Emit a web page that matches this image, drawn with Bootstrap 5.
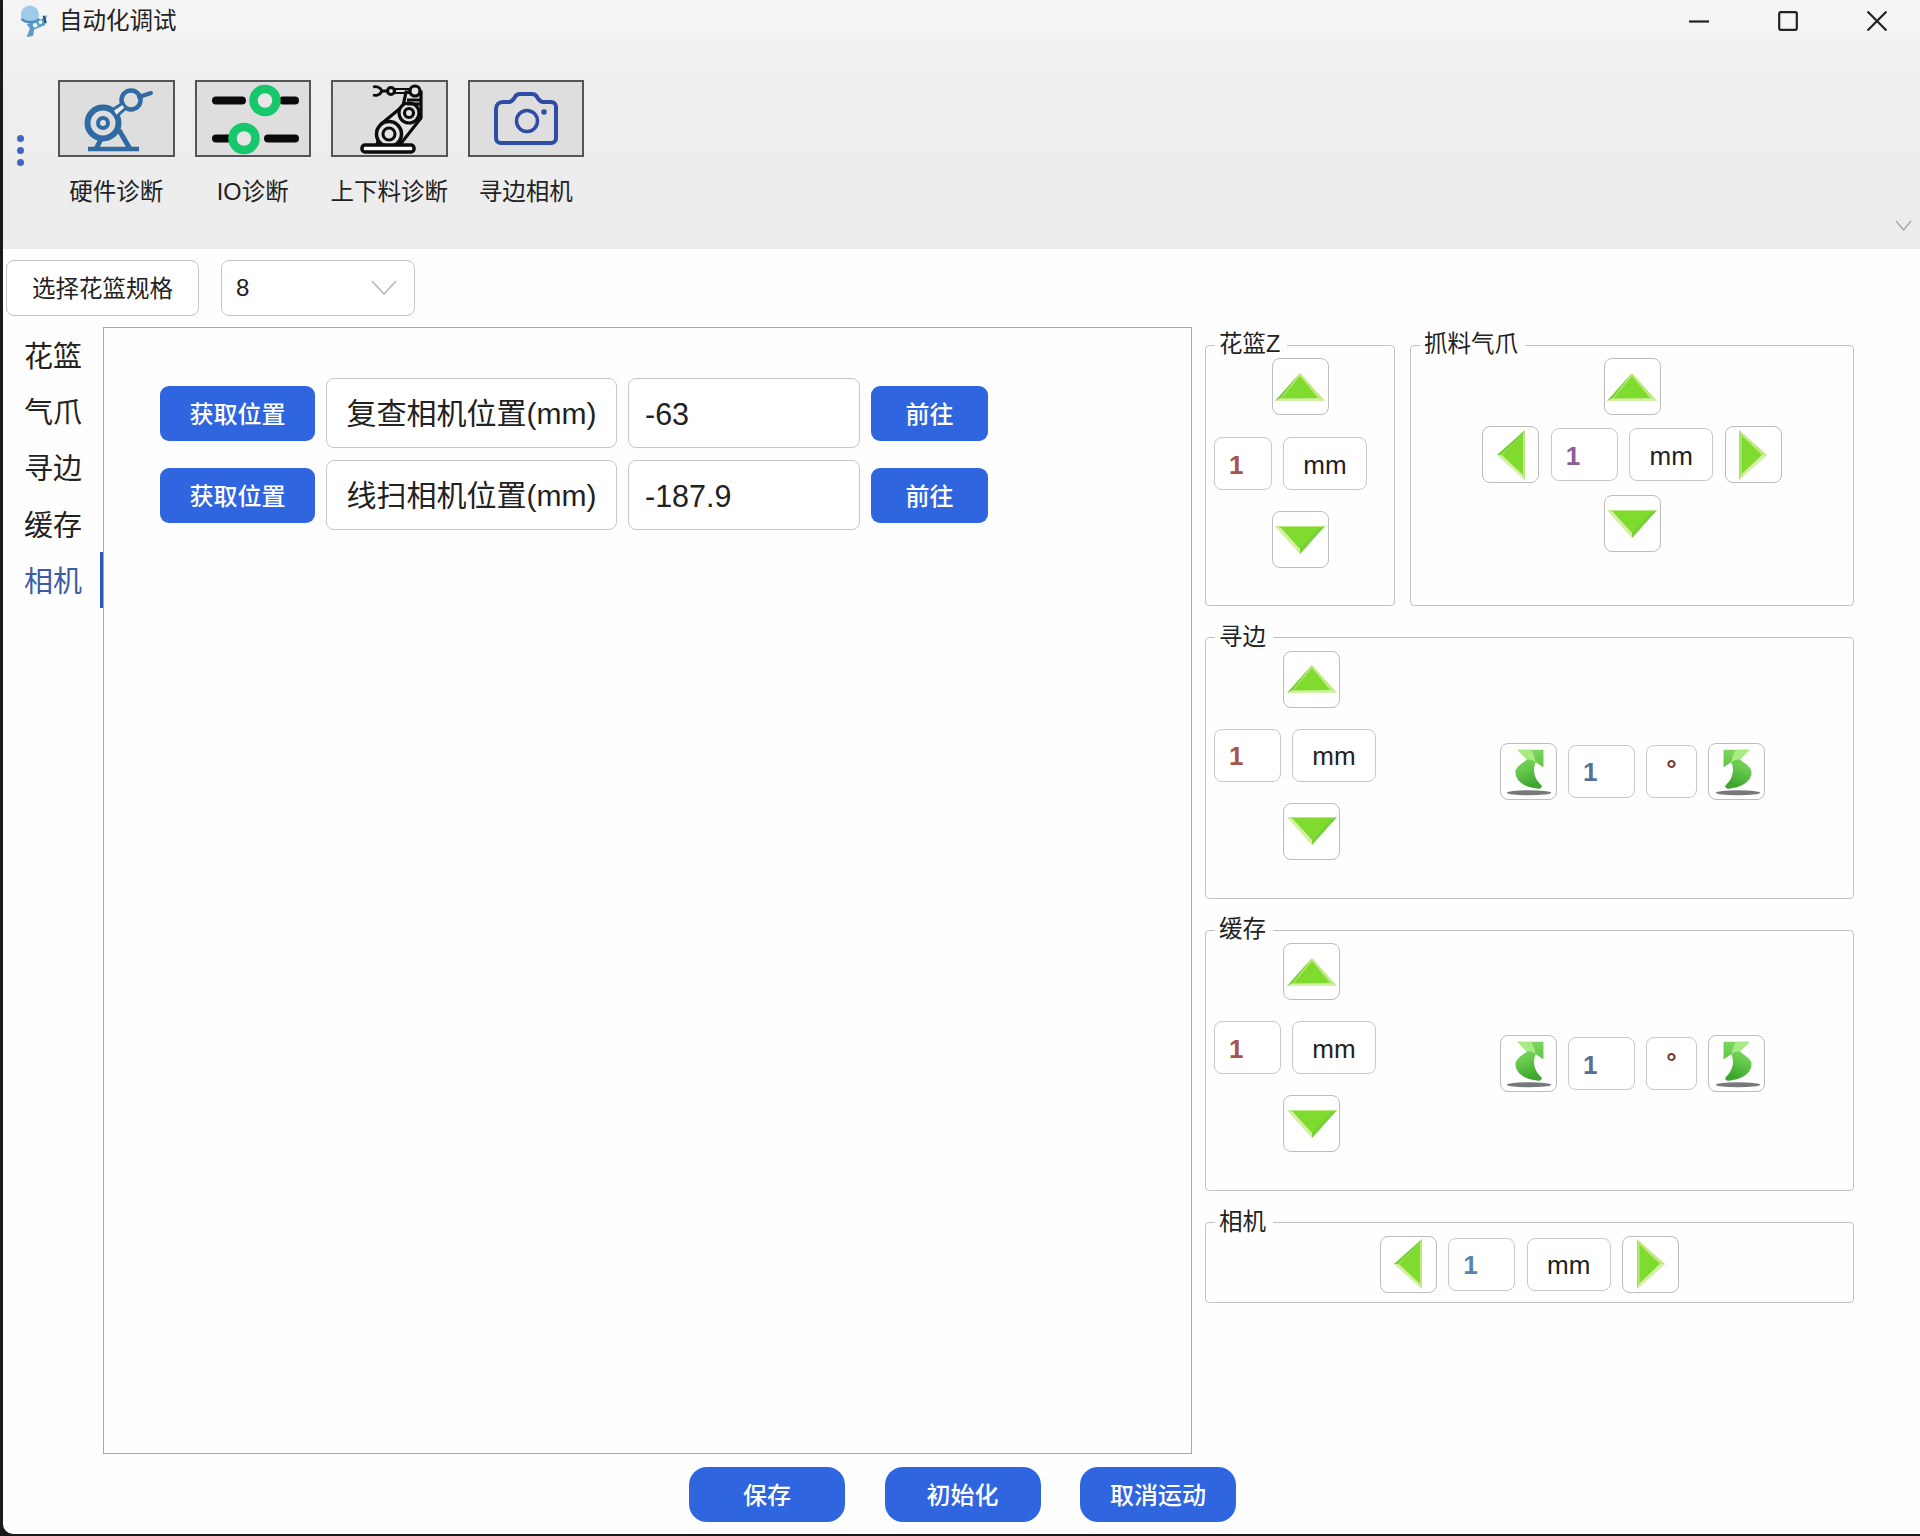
<!DOCTYPE html>
<html lang="zh-CN">
<head>
<meta charset="utf-8">
<title>自动化调试</title>
<link href="https://cdn.jsdelivr.net/npm/bootstrap@5.3.0/dist/css/bootstrap.min.css" rel="stylesheet">
<style>
html,body{margin:0;height:1536px;overflow:hidden;background:#1a1a1a}
body{font-family:"Liberation Sans","Noto Sans CJK SC",sans-serif;color:#222}
.app-win{width:1917px;height:1534px;margin-left:3px;background:#fefefe;border-bottom-left-radius:10px;overflow:hidden}
.title-bar{height:42px;background:linear-gradient(#f5f5f5,#f4f4f4 75%,#f1f1f1);flex:none}
.title-txt{font-size:23.5px;line-height:1;color:#222;margin-left:11px;padding-top:2px}
.app-icon{margin-left:13px;width:32px;height:34px}
.win-ctrls{margin-right:33px;gap:69px}
.ribbon{height:207px;background:linear-gradient(#f1f1f1,#eeeeee 25%,#ececec);flex:none;position:relative}
.rib-dots{width:55px;padding-left:14px;padding-top:93px;gap:5px}
.rib-dot{width:7px;height:7px;border-radius:50%;background:#3f66c4}
.rib-items{padding-top:38px;gap:20px}
.rib-item{width:116.5px}
.rib-tile{width:116.5px;height:77px;background:#dedede;border:2px solid #555;padding:0}
.rib-label{font-size:23.5px;line-height:1;margin-top:24px;color:#222;white-space:nowrap}
.rib-chev{position:absolute;right:8px;bottom:18px}
.spec-row{padding:11px 0 0 3px;gap:22px;flex:none;height:78px}
.spec-btn{width:193px;height:56px;font-size:23.5px;color:#222;background:#fff;border:1.5px solid #c4c4c4;border-radius:8px;padding:4px 0 0}
.spec-sel{width:194px;height:56px;font-size:24px;color:#222;border:1.5px solid #c4c4c4;border-radius:8px;padding:0 0 0 14px;background-color:#fff;background-image:url("data:image/svg+xml,%3csvg xmlns='http://www.w3.org/2000/svg' viewBox='0 0 26 16'%3e%3cpath fill='none' stroke='%23bbb' stroke-width='1.8' d='M1 1l12 13L25 1'/%3e%3c/svg%3e");background-size:26px 16px;background-position:right 17px center}
.mid-row{height:1127px;flex:none}
.tab-col{width:100px;flex:none}
.tab-item{height:56.3px;font-size:29px;line-height:1;padding:4px 0 0 21px;color:#222;border-right:3px solid transparent;display:flex;align-items:center;white-space:nowrap}
.tab-item.is-on{color:#3d5ca8;border-right-color:#2f5ab4}
.main-panel{width:1089px;height:1127px;border:1.5px solid #a8a8a8;padding:50px 0 0 56px;flex:none;gap:12px;background:#fefefe}
.pos-row{gap:11px;height:70px}
.act-btn{background:#2f66e0;border:none;color:#fff;font-weight:500;font-size:24px;border-radius:9px;padding:3px 0 0;line-height:1}
.act-btn:hover{background:#2f66e0;color:#fff}
.act-get{width:155px;height:55px;margin-top:1px}
.act-go{width:117px;height:55px;margin-top:1px}
.txt-box{background:#fff;border:1.5px solid #c8c8c8;border-radius:8px;display:flex;align-items:center;justify-content:center;white-space:nowrap}
.lab-box{width:291px;height:70px;font-size:30px}
.val-box{width:232px;height:70px;font-size:30.5px;justify-content:flex-start;padding:3px 0 0 16px}
.right-col{margin-left:13px;width:649px;padding-top:5px;gap:18.5px}
.grp{border:1.5px solid #c2c2c2;border-radius:4px;margin:0;padding:0;min-width:0;background:transparent}
.grp>legend{float:none;width:auto;margin:0 0 0 9px;padding:0 7px 0 4px;font-size:23.5px;line-height:24px;height:26px;color:#222}
.grp-tall{height:274px}
.grp-short{height:93px}
.grp-top{gap:15px}
.grp-z{width:190px;flex:none}
.grp-claw{width:444px;flex:none}
.ico-btn{width:57px;height:57px;background:#fff;border:1.5px solid #bdbdbd;border-radius:8px;padding:0;display:flex;align-items:center;justify-content:center;flex:none}
.num-box,.unit-box{height:53px;font-size:26px;flex:none;padding-top:3px}
.num-box{width:67px;justify-content:flex-start;padding-left:14px;font-weight:700}
.num-z{width:58px}
.unit-box{width:84px;color:#222}
.deg-box{width:51px;height:53px;font-size:26px;flex:none;padding-bottom:3px;color:#7a3a30;font-weight:700}
.t-red{color:#a8534f}.t-pur{color:#8a5f94}.t-blu{color:#566f92}.t-sky{color:#5585b0}
.stack-z{gap:22px}
.z-down{margin-top:-1px}
.pair{gap:11.5px}
.z-pair{align-self:flex-start;margin-left:8px;gap:11px}
.cross{gap:11px}
.cross-down{margin-top:1px}
.free-left{width:172px;margin-left:8px;flex:none;gap:21px}
.free-left .pair{gap:11px}
.free-arrow{align-self:flex-start;margin-left:69px}
.rot-row{margin:92px 88px 0 auto;gap:11px;align-self:flex-start}
.foot-row{gap:39.5px;padding:13px 0 0 2px}
.foot-btn{width:156px;height:55px;border-radius:18px}
</style>
</head>
<body>
<svg width="0" height="0" class="position-absolute">
<defs>
<linearGradient id="gArrow" x1="0" y1="0" x2="0.3" y2="1"><stop offset="0" stop-color="#8be06a"/><stop offset="0.55" stop-color="#66c94c"/><stop offset="1" stop-color="#3ea62f"/></linearGradient>
<symbol id="tri-up" viewBox="0 0 50 28"><polygon points="25,0 50,28 0,28" fill="#bfe97f"/><polygon points="25,3 43,25 6,26" fill="#7fdc2e"/><polygon points="25,0 0,28 6,25" fill="#74d238"/><polygon points="50,28 0,28 5,25.500 45,25.500" fill="#d4efa6"/></symbol>
<symbol id="tri-down" viewBox="0 0 50 28"><polygon points="0,0 50,0 25,28" fill="#bfe97f"/><polygon points="4,1 46,1 25,24" fill="#7fdc2e"/><polygon points="0,0 25,28 25,23 6,2" fill="#d4efa6"/><polygon points="50,0 25,28 25,23 44,2" fill="#74d238"/></symbol>
<symbol id="tri-left" viewBox="0 0 28 50"><polygon points="28,0 0,25 28,50" fill="#bfe97f"/><polygon points="26,4 5,25 26,45" fill="#7fdc2e"/><polygon points="28,0 0,25 4,25 25,5" fill="#74d238"/><polygon points="28,50 0,25 4,25 25,44" fill="#d4efa6"/></symbol>
<symbol id="tri-right" viewBox="0 0 28 50"><polygon points="0,0 28,25 0,50" fill="#bfe97f"/><polygon points="2,5 23,25 2,45" fill="#7fdc2e"/><polygon points="0,0 0,50 3,44 3,6" fill="#a8e46c"/><polygon points="0,50 28,25 23,25 3,44" fill="#d4efa6"/></symbol>
<symbol id="turn-a" viewBox="0 0 57 57"><ellipse cx="29" cy="50.500" rx="23" ry="2.600" fill="#77787c"/><path d="M17 6H44V24L36 19C32 27 35 37 42 43C43 45 41 47 37 46C27 45 15 40 15 29C15 24 22 20 27 16Z" fill="url(#gArrow)"/><path d="M27 16L17 6H31C34 10 35 15 36 19C33 16 30 16 27 16Z" fill="#a8ea84"/></symbol>
</defs>
</svg>
<div class="app-win d-flex flex-column">
  <div class="title-bar d-flex align-items-center">
    <svg class="app-icon" viewBox="0 0 30 32"><circle cx="13" cy="10" r="8.500" fill="#9ecbea"/><path d="M5 14C9 18 18 18 22 14" stroke="#4a88b8" stroke-width="2" fill="none"/><path d="M10 19L24 14L29 10L27 20L17 24L16 30L10 31L13 23Z" fill="#5b9cc8"/><circle cx="18" cy="20" r="2.200" fill="#eef6fb"/><circle cx="23" cy="17" r="1.800" fill="#eef6fb"/><path d="M26 11L28 18" stroke="#1f4f80" stroke-width="2"/></svg>
    <span class="title-txt">自动化调试</span>
    <div class="win-ctrls d-flex align-items-center ms-auto">
      <svg width="20" height="20" viewBox="0 0 20 20"><path d="M0 10.500H20" stroke="#222" stroke-width="2.200"/></svg>
      <svg width="20" height="20" viewBox="0 0 20 20"><rect x="1.200" y="1.200" width="17.600" height="17.600" rx="1.500" fill="none" stroke="#222" stroke-width="2.200"/></svg>
      <svg width="20" height="20" viewBox="0 0 20 20"><path d="M0.500 0.500L19.500 19.500M19.500 0.500L0.500 19.500" stroke="#222" stroke-width="2.200"/></svg>
    </div>
  </div>
  <div class="ribbon d-flex">
    <div class="rib-dots d-flex flex-column"><span class="rib-dot"></span><span class="rib-dot"></span><span class="rib-dot"></span></div>
    <div class="rib-items d-flex">
      <div class="rib-item d-flex flex-column align-items-center">
        <button type="button" class="rib-tile d-block"><svg width="112" height="73" viewBox="0 0 112 73" class="d-block" fill="none" stroke="#2f6aa2"><circle cx="43" cy="41" r="15.500" stroke-width="6"/><circle cx="43" cy="41" r="5" stroke-width="4"/><circle cx="71" cy="18" r="9.500" stroke-width="4.500"/><path d="M52 28L63 21L66 26L56 35Z" stroke-width="3" fill="#e8eef2"/><path d="M79 15L91 11" stroke-width="4" stroke-linecap="round"/><path d="M28 67H79" stroke-width="4.500"/><path d="M41 57L36 67M59 48L70 67" stroke-width="5"/></svg></button>
        <div class="rib-label">硬件诊断</div>
      </div>
      <div class="rib-item d-flex flex-column align-items-center">
        <button type="button" class="rib-tile d-block"><svg width="112" height="73" viewBox="0 0 112 73" class="d-block" fill="none"><path d="M19 18.500H45M86 18.500H98M19 56.500H32M71 56.500H98" stroke="#0a0a0a" stroke-width="8" stroke-linecap="round"/><circle cx="68" cy="18.500" r="11.500" stroke="#17c76b" stroke-width="8.500" fill="#e6e6e6"/><circle cx="47" cy="56.500" r="11.500" stroke="#17c76b" stroke-width="8.500" fill="#e6e6e6"/></svg></button>
        <div class="rib-label">IO诊断</div>
      </div>
      <div class="rib-item d-flex flex-column align-items-center">
        <button type="button" class="rib-tile d-block"><svg width="112" height="73" viewBox="0 0 112 73" class="d-block" fill="none" stroke="#0c0c0c" stroke-width="3.200"><path d="M44 64L48 42L70 24L73 10H88L88 36L66 64Z" fill="#e4e4e4"/><circle cx="56" cy="52" r="12.500" fill="#e4e4e4" stroke-width="3.500"/><circle cx="56" cy="52" r="6" stroke-width="3"/><circle cx="76" cy="31" r="10" fill="#e4e4e4"/><circle cx="76" cy="31" r="4.500"/><path d="M74 18H88M74 22H88" stroke-width="3"/><rect x="29" y="63" width="52" height="7" rx="3" fill="#fff" stroke-width="3.500"/><circle cx="82" cy="9" r="5" fill="#e4e4e4"/><circle cx="58" cy="9" r="3.500" fill="#e4e4e4"/><path d="M61 7H77M61 11H77" stroke-width="2.200"/><path d="M54 9H49C47 5 43 4 40 5M49 9C47 13 43 14 40 13" stroke-width="2.800"/></svg></button>
        <div class="rib-label">上下料诊断</div>
      </div>
      <div class="rib-item d-flex flex-column align-items-center">
        <button type="button" class="rib-tile d-block"><svg width="112" height="73" viewBox="0 0 112 73" class="d-block" fill="none" stroke="#2e4ba6" stroke-width="4"><path d="M33 20H39C42 20 43 18 45 15C46 13 48 12 50 12H62C64 12 66 13 67 15C69 18 70 20 73 20H81C84 20 86 22 86 25V56C86 59 84 61 81 61H31C28 61 26 59 26 56V27C26 23 29 20 33 20Z"/><circle cx="57" cy="39" r="10.500" stroke-width="3.500"/><circle cx="74" cy="30" r="2.800" fill="#2e4ba6" stroke="none"/></svg></button>
        <div class="rib-label">寻边相机</div>
      </div>
    </div>
    <svg class="rib-chev" width="17" height="11" viewBox="0 0 17 11"><path d="M1 1L8.500 10L16 1" fill="none" stroke="#aaa" stroke-width="1.500"/></svg>
  </div>
  <div class="spec-row d-flex">
    <button type="button" class="spec-btn btn">选择花篮规格</button>
    <select class="form-select spec-sel"><option>8</option></select>
  </div>
  <div class="mid-row d-flex">
    <div class="tab-col d-flex flex-column">
      <div class="tab-item">花篮</div>
      <div class="tab-item">气爪</div>
      <div class="tab-item">寻边</div>
      <div class="tab-item">缓存</div>
      <div class="tab-item is-on">相机</div>
    </div>
    <div class="main-panel d-flex flex-column">
      <div class="pos-row d-flex align-items-center">
        <button type="button" class="act-btn act-get btn">获取位置</button>
        <div class="txt-box lab-box">复查相机位置(mm)</div>
        <div class="txt-box val-box">-63</div>
        <button type="button" class="act-btn act-go btn">前往</button>
      </div>
      <div class="pos-row d-flex align-items-center">
        <button type="button" class="act-btn act-get btn">获取位置</button>
        <div class="txt-box lab-box">线扫相机位置(mm)</div>
        <div class="txt-box val-box">-187.9</div>
        <button type="button" class="act-btn act-go btn">前往</button>
      </div>
    </div>
    <div class="right-col d-flex flex-column">
      <div class="grp-top d-flex">
        <fieldset class="grp grp-z grp-tall">
          <legend>花篮Z</legend>
          <div class="stack-z d-flex flex-column align-items-center">
            <button type="button" class="ico-btn"><svg width="50" height="28"><use href="#tri-up"/></svg></button>
            <div class="pair z-pair d-flex"><div class="txt-box num-box num-z t-red">1</div><div class="txt-box unit-box">mm</div></div>
            <button type="button" class="ico-btn z-down"><svg width="50" height="28"><use href="#tri-down"/></svg></button>
          </div>
        </fieldset>
        <fieldset class="grp grp-claw grp-tall">
          <legend>抓料气爪</legend>
          <div class="cross d-flex flex-column align-items-center">
            <button type="button" class="ico-btn"><svg width="50" height="28"><use href="#tri-up"/></svg></button>
            <div class="pair d-flex align-items-center">
              <button type="button" class="ico-btn"><svg width="28" height="50"><use href="#tri-left"/></svg></button>
              <div class="txt-box num-box t-pur">1</div><div class="txt-box unit-box">mm</div>
              <button type="button" class="ico-btn"><svg width="28" height="50"><use href="#tri-right"/></svg></button>
            </div>
            <button type="button" class="ico-btn cross-down"><svg width="50" height="28"><use href="#tri-down"/></svg></button>
          </div>
        </fieldset>
      </div>
      <fieldset class="grp grp-tall">
        <legend>寻边</legend>
        <div class="d-flex">
          <div class="free-left d-flex flex-column">
            <button type="button" class="ico-btn free-arrow"><svg width="50" height="28"><use href="#tri-up"/></svg></button>
            <div class="pair d-flex"><div class="txt-box num-box t-red">1</div><div class="txt-box unit-box">mm</div></div>
            <button type="button" class="ico-btn free-arrow"><svg width="50" height="28"><use href="#tri-down"/></svg></button>
          </div>
          <div class="rot-row d-flex align-items-center">
            <button type="button" class="ico-btn"><svg width="57" height="57"><use href="#turn-a"/></svg></button>
            <div class="txt-box num-box t-blu">1</div><div class="txt-box deg-box">°</div>
            <button type="button" class="ico-btn"><svg width="57" height="57"><use href="#turn-a" transform="translate(57 0) scale(-1 1)"/></svg></button>
          </div>
        </div>
      </fieldset>
      <fieldset class="grp grp-tall">
        <legend>缓存</legend>
        <div class="d-flex">
          <div class="free-left d-flex flex-column">
            <button type="button" class="ico-btn free-arrow"><svg width="50" height="28"><use href="#tri-up"/></svg></button>
            <div class="pair d-flex"><div class="txt-box num-box t-red">1</div><div class="txt-box unit-box">mm</div></div>
            <button type="button" class="ico-btn free-arrow"><svg width="50" height="28"><use href="#tri-down"/></svg></button>
          </div>
          <div class="rot-row d-flex align-items-center">
            <button type="button" class="ico-btn"><svg width="57" height="57"><use href="#turn-a"/></svg></button>
            <div class="txt-box num-box t-blu">1</div><div class="txt-box deg-box">°</div>
            <button type="button" class="ico-btn"><svg width="57" height="57"><use href="#turn-a" transform="translate(57 0) scale(-1 1)"/></svg></button>
          </div>
        </div>
      </fieldset>
      <fieldset class="grp grp-short">
        <legend>相机</legend>
        <div class="pair d-flex align-items-center justify-content-center">
          <button type="button" class="ico-btn"><svg width="28" height="50"><use href="#tri-left"/></svg></button>
          <div class="txt-box num-box t-sky">1</div><div class="txt-box unit-box">mm</div>
          <button type="button" class="ico-btn"><svg width="28" height="50"><use href="#tri-right"/></svg></button>
        </div>
      </fieldset>
    </div>
  </div>
  <div class="foot-row d-flex justify-content-center">
    <button type="button" class="act-btn foot-btn btn">保存</button>
    <button type="button" class="act-btn foot-btn btn">初始化</button>
    <button type="button" class="act-btn foot-btn btn">取消运动</button>
  </div>
</div>
<script src="https://cdn.jsdelivr.net/npm/bootstrap@5.3.0/dist/js/bootstrap.bundle.min.js"></script>
</body>
</html>
